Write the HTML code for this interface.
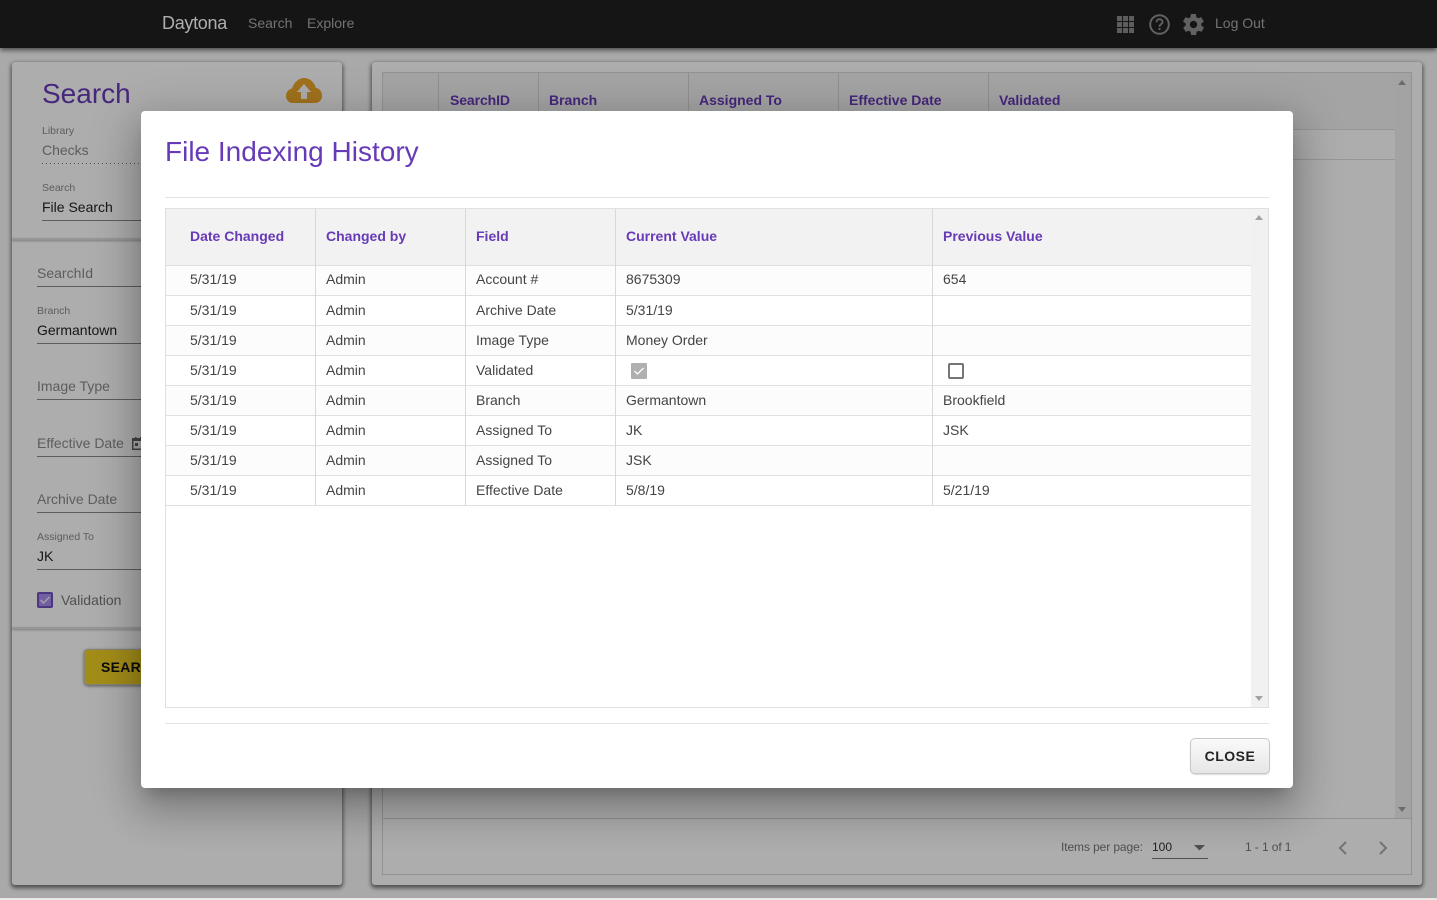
<!DOCTYPE html>
<html><head><meta charset="utf-8"><style>
html,body{margin:0;padding:0;width:1437px;height:900px;overflow:hidden;background:#e8e8e8;font-family:"Liberation Sans",Arial,sans-serif}
.a{position:absolute;white-space:nowrap}
#bg{left:0;top:0;width:1437px;height:898px;background:#fafafa}
#top{left:0;top:0;width:1437px;height:48px;background:#1f1f1f;box-shadow:0 2px 5px rgba(0,0,0,.6)}
.card{background:#fff;border-radius:3px;box-shadow:0 2px 4px 1px rgba(0,0,0,.55)}
.lab{font-size:10.5px;color:#8a8a8a}
.val{font-size:14px;color:#222}
.ph{font-size:14px;color:#8a8a8a}
.ul{height:1px;background:#8a8a8a;left:37px;width:120px}
.hd{font-size:14px;font-weight:bold;color:#673ab7}
#ov{left:0;top:0;width:1437px;height:898px;background:rgba(0,0,0,.32)}
#dlg{left:141px;top:111px;width:1152px;height:677px;background:#fff;border-radius:4px;box-shadow:0 11px 15px -7px rgba(0,0,0,.2),0 24px 38px 3px rgba(0,0,0,.14),0 9px 46px 8px rgba(0,0,0,.18)}
.rule{left:24px;width:1104px;height:1px;background:#e3e3e3}
.v{width:1px;background:#d8d8d8;top:98px;height:297px}
.h{left:25px;width:1085px;height:1px;background:#e0e0e0}
.th{top:117px;font-size:14px;font-weight:bold;color:#673ab7;line-height:16px}
.td{font-size:14px;color:#444;line-height:16px}
.z{left:25px;width:1085px;height:30px;background:#fcfcfc}
</style></head><body>
<div class="a" id="bg"></div>

<div class="a card" style="left:12px;top:62px;width:330px;height:823px"></div>
<div class="a" style="left:12px;top:238px;width:330px;height:2px;background:#ddd;box-shadow:0 1px 2px rgba(0,0,0,.3)"></div>
<div class="a" style="left:12px;top:627px;width:330px;height:2px;background:#ddd;box-shadow:0 1px 2px rgba(0,0,0,.3)"></div>
<div class="a" style="left:42px;top:77px;font-size:28px;line-height:34px;color:#673ab7">Search</div>
<svg class="a" style="left:285px;top:77px" width="38" height="26" viewBox="0 0 38 26"><path d="M8 26C3 26 1 22 1 19c0-4 3-7 6-7.500C9 5 14 1 19 1c6 0 10 4 12 10 4 .5 6 4 6 8 0 4-3 7-7 7z" fill="#eca82c"/><path d="M19 7l7 8h-4v7h-6v-7h-4z" fill="#fff"/></svg>
<div class="a lab" style="left:42px;top:125px">Library</div>
<div class="a ph" style="left:42px;top:142px">Checks</div>
<div class="a" style="left:42px;top:163px;width:115px;height:1px;background:repeating-linear-gradient(90deg,#777 0 1px,transparent 1px 4px)"></div>
<div class="a lab" style="left:42px;top:182px">Search</div>
<div class="a val" style="left:42px;top:199px">File Search</div>
<div class="a ul" style="left:42px;top:220px"></div>
<div class="a ph" style="left:37px;top:265px">SearchId</div>
<div class="a ul" style="top:286px"></div>
<div class="a lab" style="left:37px;top:305px">Branch</div>
<div class="a val" style="left:37px;top:322px">Germantown</div>
<div class="a ul" style="top:343px"></div>
<div class="a ph" style="left:37px;top:378px">Image Type</div>
<div class="a ul" style="top:399px"></div>
<div class="a ph" style="left:37px;top:435px">Effective Date</div>
<svg class="a" style="left:132px;top:437px" width="12" height="13"><rect x=".75" y="1.750" width="10.500" height="10.500" fill="none" stroke="#666" stroke-width="1.500"/><rect x="0" y="1" width="12" height="3" fill="#666"/><rect x="3" y="0" width="1.500" height="2" fill="#666"/><rect x="8" y="0" width="1.500" height="2" fill="#666"/><rect x="3" y="6" width="3" height="3" fill="#666"/></svg>
<div class="a ul" style="top:456px"></div>
<div class="a ph" style="left:37px;top:491px">Archive Date</div>
<div class="a ul" style="top:512px"></div>
<div class="a lab" style="left:37px;top:531px">Assigned To</div>
<div class="a val" style="left:37px;top:548px">JK</div>
<div class="a ul" style="top:569px"></div>
<svg class="a" style="left:37px;top:592px" width="16" height="16"><rect width="16" height="16" rx="2" fill="#7150bd"/><rect x="2" y="2" width="12" height="12" fill="#a98cf2"/><path d="M3.500 8l3 3 6-6" fill="none" stroke="#f0f0f0" stroke-width="1.500"/></svg>
<div class="a" style="left:61px;top:592px;font-size:14px;color:#777">Validation</div>
<div class="a" style="left:84px;top:649px;width:90px;height:36px;box-sizing:border-box;border:1px solid #c8c4a0;border-radius:4px;background:#f0d026;box-shadow:0 1px 3px rgba(0,0,0,.5);font-size:14px;font-weight:bold;color:#111;line-height:34px;text-indent:16px;letter-spacing:.3px;overflow:hidden">SEARCH</div>

<div class="a card" style="left:372px;top:62px;width:1050px;height:823px"></div>
<div class="a" style="left:382px;top:72px;width:1030px;height:803px;border:1px solid #d8d8d8;box-sizing:border-box"></div>
<div class="a" style="left:383px;top:73px;width:1012px;height:57px;background:#f2f2f2"></div>
<div class="a" style="left:1395px;top:73px;width:16px;height:745px;background:#f1f1f1"></div>
<div class="a" style="left:383px;top:129px;width:1012px;height:1px;background:#ddd"></div>
<div class="a" style="left:383px;top:159px;width:1012px;height:1px;background:#ddd"></div>
<div class="a" style="left:383px;top:818px;width:1028px;height:1px;background:#d8d8d8"></div>
<div class="a" style="left:438px;top:73px;width:1px;height:57px;background:#d4d4d4"></div>
<div class="a" style="left:538px;top:73px;width:1px;height:57px;background:#d4d4d4"></div>
<div class="a" style="left:688px;top:73px;width:1px;height:57px;background:#d4d4d4"></div>
<div class="a" style="left:838px;top:73px;width:1px;height:57px;background:#d4d4d4"></div>
<div class="a" style="left:988px;top:73px;width:1px;height:57px;background:#d4d4d4"></div>
<div class="a hd" style="left:450px;top:92px;letter-spacing:-.1px">SearchID</div>
<div class="a hd" style="left:549px;top:92px">Branch</div>
<div class="a hd" style="left:699px;top:92px">Assigned To</div>
<div class="a hd" style="left:849px;top:92px">Effective Date</div>
<div class="a hd" style="left:999px;top:92px">Validated</div>
<svg class="a" style="left:1398px;top:80px" width="8" height="5"><path d="M0 5L4 0l4 5z" fill="#a0a0a0"/></svg>
<svg class="a" style="left:1398px;top:807px" width="8" height="5"><path d="M0 0l4 5 4-5z" fill="#a0a0a0"/></svg>
<div class="a" style="left:1061px;top:840px;font-size:12px;color:#777;letter-spacing:-.1px">Items per page:</div>
<div class="a" style="left:1152px;top:840px;font-size:12px;color:#333">100</div>
<svg class="a" style="left:1194px;top:845px" width="11" height="6"><path d="M0 0l5.500 5.500L11 0z" fill="#777"/></svg>
<div class="a" style="left:1152px;top:858px;width:56px;height:1px;background:#777"></div>
<div class="a" style="left:1245px;top:840px;font-size:12px;color:#777;letter-spacing:-.1px">1 - 1 of 1</div>
<svg class="a" style="left:1337px;top:840px" width="12" height="16"><path d="M9 2L3 8l6 6" fill="none" stroke="#aaa" stroke-width="2"/></svg>
<svg class="a" style="left:1377px;top:840px" width="12" height="16"><path d="M3 2l6 6-6 6" fill="none" stroke="#aaa" stroke-width="2"/></svg>

<div class="a" id="top"></div>
<div class="a" style="left:162px;top:13px;font-size:18px;line-height:20px;color:#fff;letter-spacing:-.3px">Daytona</div>
<div class="a" style="left:248px;top:15px;font-size:14px;line-height:16px;color:#aaa">Search</div>
<div class="a" style="left:307px;top:15px;font-size:14px;line-height:16px;color:#aaa">Explore</div>
<svg class="a" style="left:1117px;top:16px" width="17" height="17" fill="#8a8a8a"><path d="M0 0h5v5H0zM6 0h5v5H6zM12 0h5v5h-5zM0 6h5v5H0zM6 6h5v5H6zM12 6h5v5h-5zM0 12h5v5H0zM6 12h5v5H6zM12 12h5v5h-5z"/></svg>
<svg class="a" style="left:1149px;top:14px" width="21" height="21"><circle cx="10.500" cy="10.500" r="9.300" fill="none" stroke="#8f8f8f" stroke-width="2"/><path d="M7.500 8.300c0-2 1.400-3.100 3-3.100s3 1.100 3 2.800c0 2.300-3 2.300-3 4.700" fill="none" stroke="#8f8f8f" stroke-width="1.900"/><rect x="9.500" y="14" width="2" height="2" fill="#8f8f8f"/></svg>
<svg class="a" style="left:1183px;top:14px" width="21" height="21" viewBox="2.200 2 19.600 20"><path fill="#8f8f8f" fill-rule="evenodd" d="M19.400 13c.1-.3.100-.7.100-1s0-.7-.1-1l2.100-1.600c.2-.2.200-.4.100-.6l-2-3.500c-.1-.2-.4-.3-.6-.2l-2.500 1c-.5-.4-1.100-.7-1.700-1l-.4-2.600c0-.3-.2-.5-.5-.5h-4c-.3 0-.5.200-.5.500l-.4 2.600c-.6.300-1.200.6-1.700 1l-2.500-1c-.2-.1-.5 0-.6.200l-2 3.500c-.1.200-.1.400.1.600L4.600 11c-.1.300-.1.700-.1 1s0 .7.100 1l-2.100 1.600c-.2.200-.2.400-.1.600l2 3.500c.1.200.4.300.6.200l2.500-1c.5.400 1.100.7 1.700 1l.4 2.600c0 .3.200.5.500.5h4c.3 0 .5-.2.500-.5l.4-2.600c.6-.3 1.200-.6 1.700-1l2.500 1c.2.100.5 0 .6-.2l2-3.500c.1-.2.1-.4-.1-.6zM12 15.500a3.500 3.500 0 1 1 0-7 3.500 3.500 0 0 1 0 7z"/></svg>
<div class="a" style="left:1215px;top:15px;font-size:14px;line-height:16px;color:#aaa">Log Out</div>

<div class="a" id="ov"></div>

<div class="a" id="dlg">
<div class="a" style="left:24px;top:24px;font-size:28px;line-height:33px;color:#673ab7">File Indexing History</div>
<div class="a rule" style="top:86px"></div>
<div class="a" style="left:24px;top:97px;width:1104px;height:500px;border:1px solid #e0e0e0;box-sizing:border-box"></div>
<div class="a" style="left:25px;top:98px;width:1085px;height:56px;background:#f2f2f2"></div>
<div class="a" style="left:1110px;top:98px;width:17px;height:498px;background:#f1f1f1"></div>
<svg class="a" style="left:1114px;top:104px" width="8" height="5"><path d="M0 5L4 0l4 5z" fill="#a3a3a3"/></svg>
<svg class="a" style="left:1114px;top:585px" width="8" height="5"><path d="M0 0l4 5 4-5z" fill="#a3a3a3"/></svg>
<div class="a z" style="top:155px"></div><div class="a z" style="top:215px"></div><div class="a z" style="top:275px"></div><div class="a z" style="top:335px"></div>
<div class="a h" style="top:154px"></div><div class="a h" style="top:184px"></div><div class="a h" style="top:214px"></div><div class="a h" style="top:244px"></div><div class="a h" style="top:274px"></div><div class="a h" style="top:304px"></div><div class="a h" style="top:334px"></div><div class="a h" style="top:364px"></div><div class="a h" style="top:394px"></div>
<div class="a v" style="left:174px"></div><div class="a v" style="left:324px"></div><div class="a v" style="left:474px"></div><div class="a v" style="left:791px"></div>
<div class="a th" style="left:49px">Date Changed</div>
<div class="a th" style="left:185px">Changed by</div>
<div class="a th" style="left:335px">Field</div>
<div class="a th" style="left:485px">Current Value</div>
<div class="a th" style="left:802px">Previous Value</div>

<div class="a td" style="left:49px;top:160px">5/31/19</div><div class="a td" style="left:185px;top:160px">Admin</div><div class="a td" style="left:335px;top:160px">Account #</div><div class="a td" style="left:485px;top:160px">8675309</div><div class="a td" style="left:802px;top:160px">654</div>
<div class="a td" style="left:49px;top:191px">5/31/19</div><div class="a td" style="left:185px;top:191px">Admin</div><div class="a td" style="left:335px;top:191px">Archive Date</div><div class="a td" style="left:485px;top:191px">5/31/19</div>
<div class="a td" style="left:49px;top:221px">5/31/19</div><div class="a td" style="left:185px;top:221px">Admin</div><div class="a td" style="left:335px;top:221px">Image Type</div><div class="a td" style="left:485px;top:221px">Money Order</div>
<div class="a td" style="left:49px;top:251px">5/31/19</div><div class="a td" style="left:185px;top:251px">Admin</div><div class="a td" style="left:335px;top:251px">Validated</div>
<svg class="a" style="left:490px;top:252px" width="16" height="16"><rect width="16" height="16" rx="1" fill="#b0b0b0"/><path d="M3.500 8l3 3 6-6" fill="none" stroke="#fff" stroke-width="1.300"/></svg>
<div class="a" style="left:807px;top:252px;width:16px;height:16px;box-sizing:border-box;border:2px solid #757575;border-radius:2px"></div>
<div class="a td" style="left:49px;top:281px">5/31/19</div><div class="a td" style="left:185px;top:281px">Admin</div><div class="a td" style="left:335px;top:281px">Branch</div><div class="a td" style="left:485px;top:281px">Germantown</div><div class="a td" style="left:802px;top:281px">Brookfield</div>
<div class="a td" style="left:49px;top:311px">5/31/19</div><div class="a td" style="left:185px;top:311px">Admin</div><div class="a td" style="left:335px;top:311px">Assigned To</div><div class="a td" style="left:485px;top:311px">JK</div><div class="a td" style="left:802px;top:311px">JSK</div>
<div class="a td" style="left:49px;top:341px">5/31/19</div><div class="a td" style="left:185px;top:341px">Admin</div><div class="a td" style="left:335px;top:341px">Assigned To</div><div class="a td" style="left:485px;top:341px">JSK</div>
<div class="a td" style="left:49px;top:371px">5/31/19</div><div class="a td" style="left:185px;top:371px">Admin</div><div class="a td" style="left:335px;top:371px">Effective Date</div><div class="a td" style="left:485px;top:371px">5/8/19</div><div class="a td" style="left:802px;top:371px">5/21/19</div>

<div class="a rule" style="top:612px"></div>
<div class="a" style="left:1049px;top:627px;width:80px;height:36px;box-sizing:border-box;border:1px solid #c8c8c8;border-radius:5px;background:linear-gradient(#fafafa,#e6e6e6);box-shadow:0 1px 1px rgba(0,0,0,.15);text-align:center;font-size:14px;font-weight:bold;line-height:34px;color:#222;letter-spacing:.5px">CLOSE</div>
</div>
</body></html>
